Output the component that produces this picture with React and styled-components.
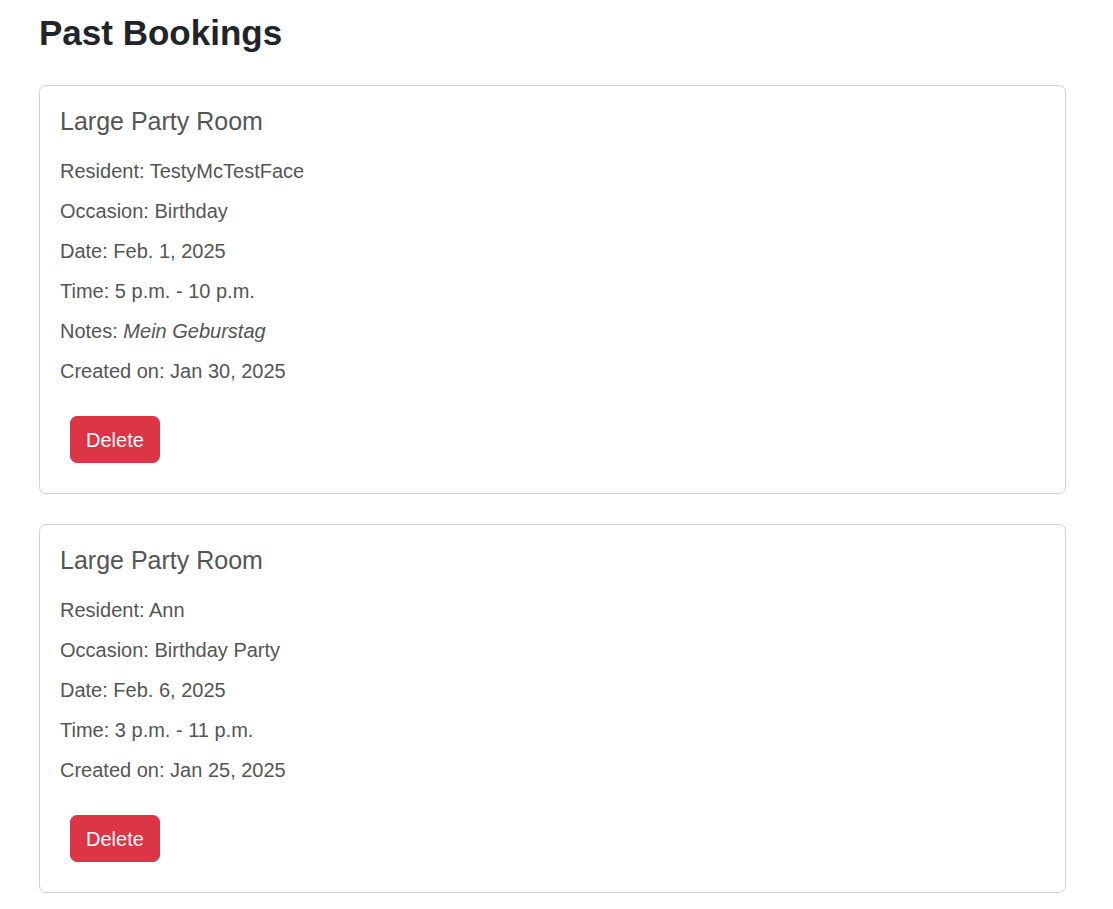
import React from 'react'
import styled, { createGlobalStyle } from 'styled-components'

const GlobalStyle = createGlobalStyle`
  body {
    margin: 0;
    background: #fff;
    font-family: "Liberation Sans", Arial, sans-serif;
  }
`

const Page = styled.div`
  padding: 12px 47px 20px 39px;
`

const Heading = styled.h3`
  margin: 0 0 31px;
  font-size: 35px;
  line-height: 42px;
  font-weight: 700;
  color: #212529;
`

const Card = styled.div`
  border: 1px solid rgba(0, 0, 0, 0.175);
  border-radius: 7px;
  padding: 20px;
  margin-bottom: 30px;
`

const Title = styled.h5`
  margin: 0 0 20px;
  font-size: 25px;
  line-height: 30px;
  font-weight: 400;
  color: #555;
`

const Line = styled.p`
  margin: 0 0 10px;
  font-size: 20px;
  line-height: 30px;
  color: #555;

  em {
    font-style: italic;
  }
`

const Actions = styled.div`
  padding: 20px 10px 10px;
`

const DeleteButton = styled.button`
  display: inline-block;
  padding: 7.5px 15px;
  font-family: inherit;
  font-size: 20px;
  line-height: 30px;
  color: #fff;
  background: #dc3545;
  border: 1px solid #dc3545;
  border-radius: 7px;
  cursor: pointer;
`

const bookings = [
  {
    room: 'Large Party Room',
    resident: 'TestyMcTestFace',
    occasion: 'Birthday',
    date: 'Feb. 1, 2025',
    time: '5 p.m. - 10 p.m.',
    notes: 'Mein Geburstag',
    created: 'Jan 30, 2025',
  },
  {
    room: 'Large Party Room',
    resident: 'Ann',
    occasion: 'Birthday Party',
    date: 'Feb. 6, 2025',
    time: '3 p.m. - 11 p.m.',
    created: 'Jan 25, 2025',
  },
]

export default function App() {
  return (
    <>
      <GlobalStyle />
      <Page>
        <Heading>Past Bookings</Heading>
        {bookings.map((b, i) => (
          <Card key={i}>
            <Title>{b.room}</Title>
            <Line>Resident: {b.resident}</Line>
            <Line>Occasion: {b.occasion}</Line>
            <Line>Date: {b.date}</Line>
            <Line>Time: {b.time}</Line>
            {b.notes && <Line>Notes: <em>{b.notes}</em></Line>}
            <Line>Created on: {b.created}</Line>
            <Actions>
              <DeleteButton>Delete</DeleteButton>
            </Actions>
          </Card>
        ))}
      </Page>
    </>
  )
}
